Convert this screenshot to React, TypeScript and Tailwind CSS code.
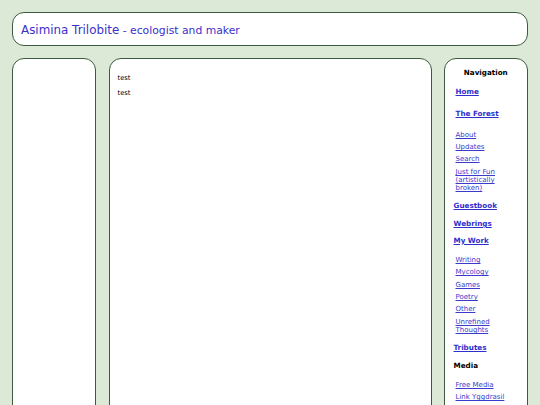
import React from "react";

type NavItem = {
  label: string;
  href?: string;
  kind: "main" | "sub" | "plain";
  mt: string;
  indent?: boolean;
};

// Sidebar menu, in order. mt = space above each entry.
const navItems: NavItem[] = [
  { label: "Home", href: "#", kind: "main", mt: "mt-[10px]", indent: true },
  { label: "The Forest", href: "#", kind: "main", mt: "mt-[13px]", indent: true },
  { label: "About", href: "#", kind: "sub", mt: "mt-[13px]" },
  { label: "Updates", href: "#", kind: "sub", mt: "mt-[4px]" },
  { label: "Search", href: "#", kind: "sub", mt: "mt-[4px]" },
  { label: "Just for Fun (artistically broken)", href: "#", kind: "sub", mt: "mt-[5px]" },
  { label: "Guestbook", href: "#", kind: "main", mt: "mt-[9px]" },
  { label: "Webrings", href: "#", kind: "main", mt: "mt-[9px]" },
  { label: "My Work", href: "#", kind: "main", mt: "mt-[8px]" },
  { label: "Writing", href: "#", kind: "sub", mt: "mt-[11px]" },
  { label: "Mycology", href: "#", kind: "sub", mt: "mt-[4px]" },
  { label: "Games", href: "#", kind: "sub", mt: "mt-[5px]" },
  { label: "Poetry", href: "#", kind: "sub", mt: "mt-[4px]" },
  { label: "Other", href: "#", kind: "sub", mt: "mt-[4px]" },
  { label: "Unrefined Thoughts", href: "#", kind: "sub", mt: "mt-[5px]" },
  { label: "Tributes", href: "#", kind: "main", mt: "mt-[9px]" },
  { label: "Media", kind: "plain", mt: "mt-[9px]" },
  { label: "Free Media", href: "#", kind: "sub", mt: "mt-[11px]" },
  { label: "Link Yggdrasil", href: "#", kind: "sub", mt: "mt-[4px]" },
];

const box = "bg-white border-[1.5px] border-[#3d5a3d] rounded-[12px]";

const NavEntry: React.FC<{ item: NavItem }> = ({ item }) => {
  if (item.kind === "plain") {
    return (
      <div className={`${item.mt} text-[7.2px] leading-[9px] font-bold text-black`}>
        {item.label}
      </div>
    );
  }
  if (item.kind === "main") {
    return (
      <a
        href={item.href}
        className={`${item.mt} ${item.indent ? "pl-[2px]" : ""} block text-[7.2px] leading-[9px] font-bold text-[#2f2fcc] underline`}
      >
        {item.label}
      </a>
    );
  }
  return (
    <a
      href={item.href}
      className={`${item.mt} block pl-[2px] text-[7px] leading-[8px] text-[#3a3acc] underline`}
    >
      {item.label}
    </a>
  );
};

export default function App() {
  return (
    <div
      className="w-[540px] h-[405px] overflow-hidden bg-[#dce9d7] px-[12px] pt-[12px]"
      style={{ fontFamily: '"DejaVu Sans", Verdana, sans-serif' }}
    >
      {/* header */}
      <header className={`${box} h-[34px] flex items-center pl-[8px]`}>
        <h1 className="text-[#3a2fcc] whitespace-nowrap">
          <span className="text-[11.9px]">Asimina Trilobite</span>
          <span className="text-[10.8px]"> - ecologist and maker</span>
        </h1>
      </header>

      {/* three columns */}
      <div className="mt-[12px] flex gap-[12.5px]">
        <aside className={`${box} w-[84px] h-[420px] shrink-0`} />

        <main className={`${box} flex-1 h-[420px] pl-[8px] pt-[15px] text-[6.75px] leading-[8px] text-black`}>
          <p>test</p>
          <p className="mt-[7px]">test</p>
        </main>

        <nav className={`${box} w-[84px] h-[420px] shrink-0 pl-[8.5px] pr-[10px] pt-[9px]`}>
          <div className="text-center text-[7.2px] leading-[9px] font-bold text-black pl-[1px]">
            Navigation
          </div>
          <div className="flex flex-col">
            {navItems.map((item) => (
              <NavEntry key={item.label} item={item} />
            ))}
          </div>
        </nav>
      </div>
    </div>
  );
}
